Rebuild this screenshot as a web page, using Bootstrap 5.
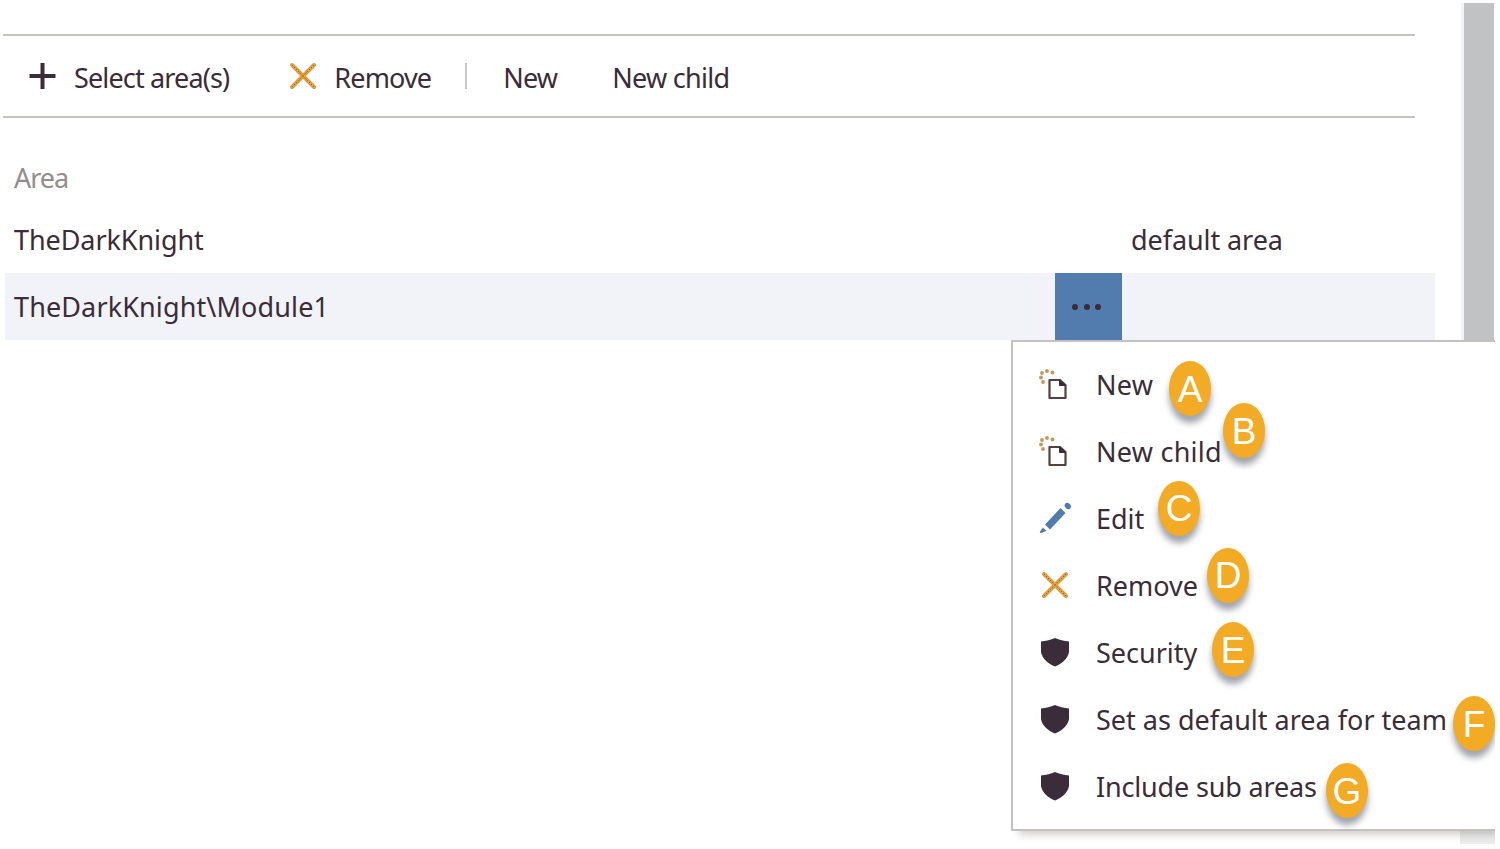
<!DOCTYPE html>
<html lang="en">
<head>
<meta charset="utf-8">
<title>Areas</title>
<meta name="viewport" content="width=device-width, initial-scale=1">
<link href="https://cdn.jsdelivr.net/npm/bootstrap@5.3.0/dist/css/bootstrap.min.css" rel="stylesheet">
<style>
  body { font-family: "Noto Sans", "Open Sans", sans-serif; font-size: 27px; line-height: 1; color: #3a2c38; background: #fff; height: 849px; overflow: hidden; }
  .lbl { display: inline-block; white-space: nowrap; }
  .page { width: 1435px; }
  .toolbar { margin: 34px 0 0 3px; width: 1412px; height: 84px; border-top: 2px solid #c4c3be; border-bottom: 2px solid #c4c3be; padding-left: 25px; }
  .toolbar .lbl { margin-top: 3px; letter-spacing: -.85px; }
  .toolbar svg { flex: none; }
  .toolbar .t1 { margin-left: 18px; }
  .x1 { width: 34px; height: 34px; margin: 2px 0 0 57px; }
  .toolbar .t2 { margin-left: 14px; }
  .toolbar .t4 { margin-left: 55px; letter-spacing: -.7px; }
  .sep { width: 2px; height: 26px; background: #c9c8c8; margin: -1px 36px 0 34px; }
  .area-head { height: 88px; padding: 33px 0 0 14px; color: #948d8d; line-height: 54px; letter-spacing: -1px; }
  .area-row { height: 67px; margin-left: 5px; padding-left: 9px; letter-spacing: -.08px; }
  .area-row.selected { background: #f1f3f8; letter-spacing: .12px; }
  .name-cell { width: 1041px; }
  .dots { width: 67px; height: 67px; gap: 5.3px; padding-right: 4px; }
  .selected .dots { background: #517cad; }
  .dots i { width: 6px; height: 6px; border-radius: 50%; background: #3a2c38; }
  .def { margin-left: 9px; }
  .scroll-track { left: 1464px; top: 3px; width: 30px; height: 338px; background: #c1c2c4; box-shadow: -3px 0 0 #f2f3f8; }
  .scroll-end { left: 1460px; top: 831px; width: 35px; height: 13px; background: #ebebed; }
  .ctx { left: 1011px; top: 340px; width: 484px; height: 491px; background: #fff; border: 2px solid #c3c2c0; border-right: 0; padding: 9px 0 0 25px; box-shadow: 6px 6px 7px -2px rgba(80,75,60,.25); clip-path: inset(0 0 -16px 0); }
  .ctx-item { height: 67px; }
  .ctx-item svg { width: 34px; height: 34px; margin-right: 24px; flex: none; overflow: visible; }
  .pin { width: 42px; height: 55px; border-radius: 50%; background: #f3aa25; color: #fff; font-family: "Liberation Sans", sans-serif; font-size: 37px; box-shadow: 0 7px 6px rgba(70,75,90,.5); padding-top: 2px; }
  .pa { left: 131px; top: 10px; }
  .pb { left: 185px; top: -15px; }
  .pc { left: 120px; top: -4px; padding-top: 0; }
  .pd { left: 169px; top: -4px; padding-top: 0; }
  .pe { left: 174px; top: 3px; }
  .pf { left: 415px; top: 10px; }
  .pg { left: 288px; top: 10px; }
  .tight { letter-spacing: -.17px; }
  .wide { letter-spacing: .25px; }
</style>
</head>
<body class="position-relative">
<svg class="d-none">
  <symbol id="cross" viewBox="0 0 34 34"><path d="M6 5 28 27M28 5 6 27" stroke="#c09a78" stroke-width="4" stroke-linecap="round"/><path d="M6 5 28 27M28 5 6 27" stroke="#f0a11f" stroke-width="2.600" stroke-linecap="round"/><path d="M6 5 28 27M28 5 6 27" stroke="#5b4030" stroke-width=".9" stroke-dasharray="1 2"/></symbol>
  <symbol id="doc" viewBox="0 0 34 34"><path d="M11.500 12H22L27.500 17V30H11.500Z" fill="none" stroke="#54403f" stroke-width="2.200" stroke-linejoin="round"/><path d="M21.500 12V17.500H27.500Z" fill="#3a2c38" stroke="#3a2c38"/><g fill="#c4965c"><circle cx="4" cy="5" r="1.900"/><circle cx="9" cy="3" r="1.900"/><circle cx="14.500" cy="4.500" r="1.900"/><circle cx="3" cy="9.500" r="1.900"/><circle cx="5" cy="14" r="1.900"/></g></symbol>
  <symbol id="shield" viewBox="0 0 34 34"><path d="M17 2C21 4 26 5 31 5.500V16C30 23 23 28 17 30.500C11 28 4 23 3 16V5.500C8 5 13 4 17 2Z" fill="#3a2c38"/></symbol>
</svg>
<main class="page">
  <nav class="toolbar d-flex align-items-center" aria-label="Area actions">
    <svg width="28" height="28" viewBox="0 0 28 28"><path d="M14.500 1V27M1.500 14H27.500" stroke="#3a2c38" stroke-width="4"/></svg>
    <span class="lbl t1">Select area(s)</span>
    <svg class="x1"><use href="#cross"/></svg>
    <span class="lbl t2">Remove</span>
    <span class="sep"></span>
    <span class="lbl t3">New</span>
    <span class="lbl t4">New child</span>
  </nav>
  <div class="area-head"><span class="lbl">Area</span></div>
  <div class="area-row d-flex align-items-center"><div class="name-cell">TheDarkKnight</div><div class="dots"></div><span class="lbl def">default area</span></div>
  <div class="area-row selected d-flex align-items-center"><div class="name-cell">TheDarkKnight\Module1</div><div class="dots d-flex align-items-center justify-content-center"><i></i><i></i><i></i></div></div>
</main>
<div class="scroll-track position-absolute"></div>
<div class="scroll-end position-absolute"></div>
<div class="ctx position-absolute">
  <div class="ctx-item position-relative d-flex align-items-center"><svg><use href="#doc"/></svg><span class="lbl wide">New</span><span class="pin pa position-absolute d-flex align-items-center justify-content-center">A</span></div>
  <div class="ctx-item position-relative d-flex align-items-center"><svg><use href="#doc"/></svg><span class="lbl wide">New child</span><span class="pin pb position-absolute d-flex align-items-center justify-content-center">B</span></div>
  <div class="ctx-item position-relative d-flex align-items-center"><svg viewBox="0 0 34 34"><g fill="#517cad"><path d="M7 22.500 22.500 6 27.500 11 12 27.500Z"/><ellipse cx="29.800" cy="4" rx="3.400" ry="2.700" transform="rotate(45 29.800 4)"/><path d="M5 25.500 8.500 29 3 31Q1.500 31 2 29.500Z"/></g></svg><span class="lbl">Edit</span><span class="pin pc position-absolute d-flex align-items-center justify-content-center">C</span></div>
  <div class="ctx-item position-relative d-flex align-items-center"><svg><use href="#cross"/></svg><span class="lbl">Remove</span><span class="pin pd position-absolute d-flex align-items-center justify-content-center">D</span></div>
  <div class="ctx-item position-relative d-flex align-items-center"><svg><use href="#shield"/></svg><span class="lbl">Security</span><span class="pin pe position-absolute d-flex align-items-center justify-content-center">E</span></div>
  <div class="ctx-item position-relative d-flex align-items-center"><svg><use href="#shield"/></svg><span class="lbl">Set as default area for team</span><span class="pin pf position-absolute d-flex align-items-center justify-content-center">F</span></div>
  <div class="ctx-item position-relative d-flex align-items-center"><svg><use href="#shield"/></svg><span class="lbl tight">Include sub areas</span><span class="pin pg position-absolute d-flex align-items-center justify-content-center">G</span></div>
</div>
<script src="https://cdn.jsdelivr.net/npm/bootstrap@5.3.0/dist/js/bootstrap.bundle.min.js"></script>
</body>
</html>
